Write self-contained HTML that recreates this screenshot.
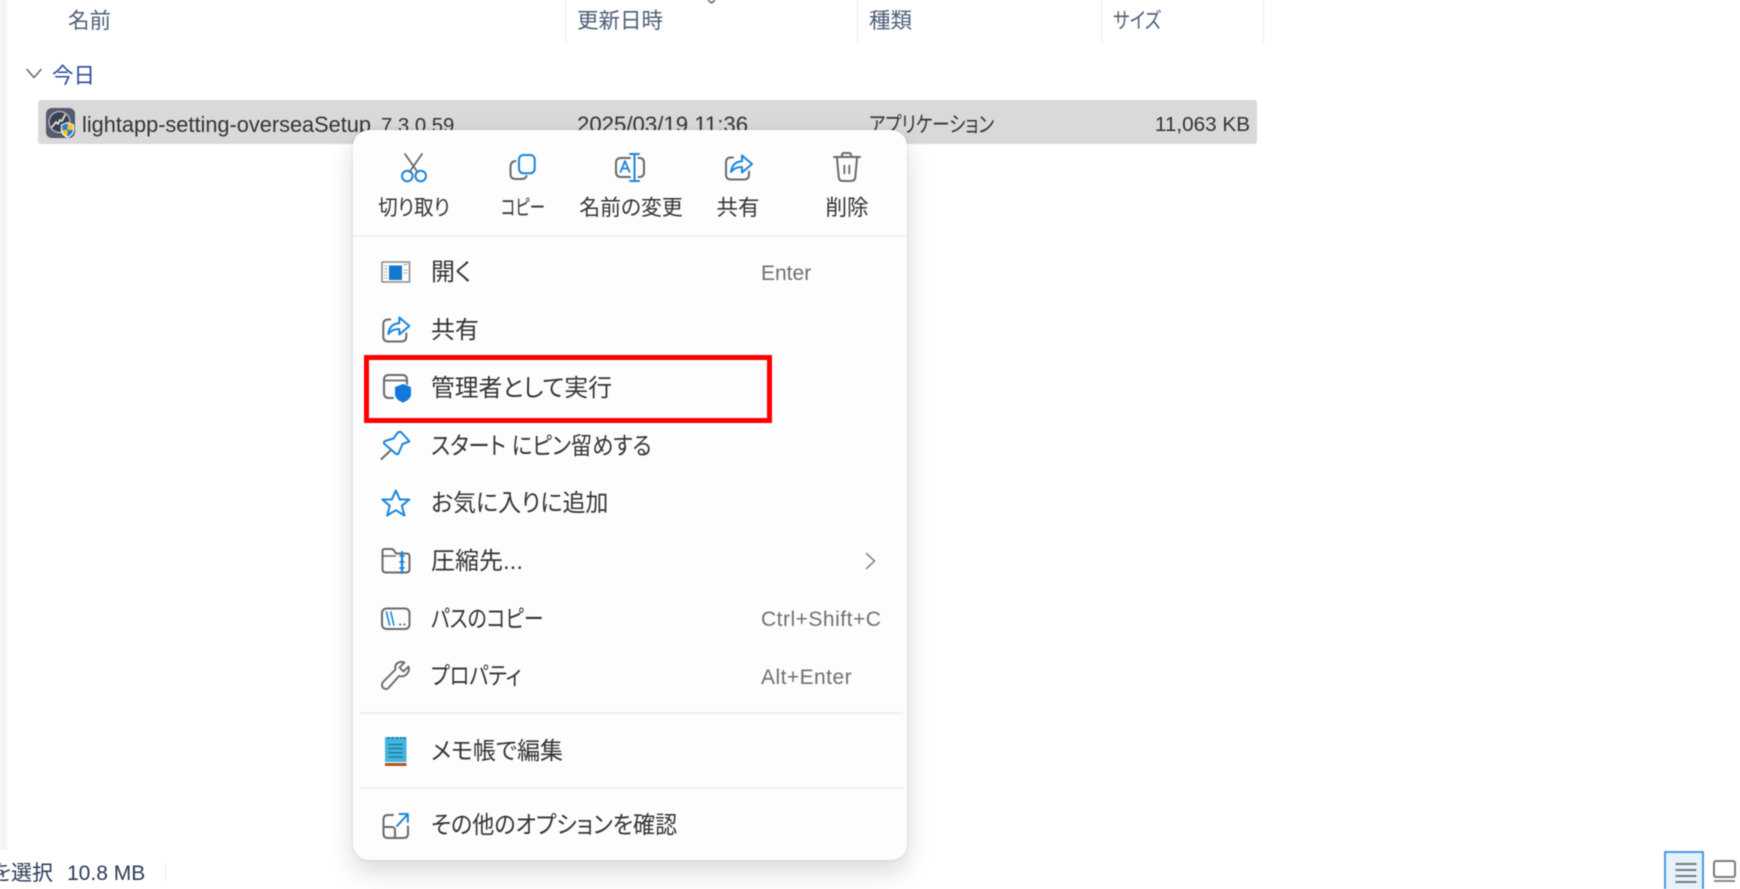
<!DOCTYPE html>
<html lang="ja">
<head>
<meta charset="utf-8">
<title>Context menu</title>
<style>
html,body{margin:0;padding:0;width:1740px;height:889px;overflow:hidden;background:#fff}
#w{position:absolute;left:0;top:0;width:1740px;height:889px;overflow:hidden;filter:blur(.4px);font-family:"Liberation Sans","Noto Sans CJK JP",sans-serif;font-feature-settings:"palt";color:#333}
#w div{position:absolute;white-space:nowrap}
.h{top:6.500px;line-height:28px;font-size:21.500px;color:#4d5f78;transform-origin:left center}
.sep{top:0;width:1px;height:43px;background:#ebebeb}
.c{top:111px;line-height:28px;font-size:22.200px;color:#333;transform-origin:left center}
#menu{left:353px;top:130px;width:554px;height:730px;background:#fdfdfd;border-radius:16px;box-shadow:0 12px 26px rgba(0,0,0,.15),0 0 4px rgba(0,0,0,.1)}
.l{left:431px;line-height:32px;font-size:24px;color:#333;transform-origin:left center}
.k{left:761px;line-height:28px;font-size:21px;color:#707070}
.b{line-height:28px;font-size:21.500px;color:#333;top:194px}
.d{background:#efefef}
svg{position:absolute;left:0;top:0}
</style>
</head>
<body>
<div id="w">
<div style="left:0;top:0;width:7px;height:850px;background:#f4f4f4"></div>

<div class="h" style="left:68px">名前</div>
<div class="h" style="left:577px">更新日時</div>
<div class="h" style="left:869px">種類</div>
<div class="h" style="left:1113px;transform:scaleX(.82)">サイズ</div>
<div class="sep" style="left:565px"></div>
<div class="sep" style="left:857px"></div>
<div class="sep" style="left:1101px"></div>
<div class="sep" style="left:1263px"></div>

<div style="left:52px;top:61px;line-height:30px;font-size:21.500px;color:#2c4a9c">今日</div>

<div style="left:38px;top:100px;width:1219px;height:44px;background:#d9d9d9;border-radius:3px"></div>
<div class="c" style="left:82px;font-size:21.750px">lightapp-setting-overseaSetup<span style="font-size:18px">_</span><span style="font-size:20.300px">7.3.0.59</span></div>
<div class="c" style="left:577px">2025/03/19 11:36</div>
<div class="c" style="left:869px;font-size:21.800px;transform:scaleX(.805)">アプリケーション</div>
<div class="c" style="right:490px;font-size:20.700px">11,063 KB</div>

<div id="menu"></div>

<div class="b" style="left:414px;transform:translateX(-50%) scaleX(.91)">切り取り</div>
<div class="b" style="left:523px;transform:translateX(-50%) scaleX(.716)">コピー</div>
<div class="b" style="left:631px;transform:translateX(-50%) scaleX(.97)">名前の変更</div>
<div class="b" style="left:738px;transform:translateX(-50%)">共有</div>
<div class="b" style="left:847px;transform:translateX(-50%)">削除</div>
<div class="d" style="left:353px;top:235px;width:554px;height:2px"></div>

<div class="l" style="top:257px">開く</div>
<div class="l" style="top:315px">共有</div>
<div class="l" style="top:373px;transform:scaleX(.99)">管理者として実行</div>
<div class="l" style="top:431px;transform:scaleX(.885)">スタート にピン留めする</div>
<div class="l" style="top:488px;transform:scaleX(.958)">お気に入りに追加</div>
<div class="l" style="top:546px">圧縮先...</div>
<div class="l" style="top:604px;transform:scaleX(.827)">パスのコピー</div>
<div class="l" style="top:661px;transform:scaleX(.844)">プロパティ</div>
<div class="l" style="top:736px;transform:scaleX(.957)">メモ帳で編集</div>
<div class="l" style="top:810px;transform:scaleX(.92)">その他のオプションを確認</div>

<div class="k" style="top:260px">Enter</div>
<div class="k" style="top:606px;letter-spacing:.5px">Ctrl+Shift+C</div>
<div class="k" style="top:664px;letter-spacing:.45px">Alt+Enter</div>

<div class="d" style="left:360px;top:712px;width:543px;height:2px"></div>
<div class="d" style="left:360px;top:787px;width:543px;height:2px"></div>

<div style="left:364px;top:355px;width:398px;height:58px;border:5px solid #fe0000"></div>

<div style="right:1687px;top:860px;line-height:28px;font-size:21px;color:#2b3b58">を選択</div>
<div style="left:67px;top:859.500px;line-height:28px;font-size:21px;color:#2b3b58">10.8 MB</div>
<div style="left:165px;top:862px;width:1px;height:20px;background:#ececec"></div>

<div style="left:1664px;top:851px;width:36px;height:50px;background:#e5f1fb;border:2px solid #4a9ae0"></div>

<svg width="1740" height="889" viewBox="0 0 1740 889" fill="none" stroke-linecap="round" stroke-linejoin="round">
  <!-- sort caret -->
  <path d="M708 0l3.500 3 3.500-3" stroke="#666" stroke-width="1.500"/>
  <!-- group chevron -->
  <path d="M27 69.500l7 8 7-8" stroke="#666" stroke-width="1.500"/>

  <!-- file icon -->
  <rect x="46" y="108" width="29" height="30" rx="6" fill="#555a6c"/>
  <circle cx="59.500" cy="122" r="10.500" fill="#3a3f50" stroke="#a9adbb" stroke-width="1.500"/>
  <path d="M52 127l4-5 2 2 2-4 2 1 3-6" stroke="#e2e4ea" stroke-width="1.800"/>
  <path d="M67.500 122.500l6 2.500v5q0 4.500-6 7.500-6-3-6-7.500v-5z" fill="#fff" stroke="#fff" stroke-width="1.200"/>
  <path d="M67.500 123l-5.500 2.200v4.800h5.500z" fill="#2a7fd5"/>
  <path d="M67.500 123l5.500 2.200v4.800h-5.500z" fill="#f7c325"/>
  <path d="M62 130q.2 4 5.500 7v-7z" fill="#f7c325"/>
  <path d="M73 130q-.2 4-5.500 7v-7z" fill="#2a7fd5"/>

  <!-- scissors -->
  <path d="M405 154l12.500 18M422 154l-12.500 18" stroke="#6a6a6a" stroke-width="1.800"/>
  <circle cx="407.300" cy="176" r="5.300" stroke="#1a86dc" stroke-width="2"/>
  <circle cx="420.700" cy="176" r="5.300" stroke="#1a86dc" stroke-width="2"/>

  <!-- copy -->
  <rect x="519" y="155" width="15.700" height="18.300" rx="4.500" stroke="#1a86dc" stroke-width="2"/>
  <path d="M515.500 161q-5 .5-5 6v7q0 5 5 5h6q4 0 5-3" stroke="#6a6a6a" stroke-width="2"/>

  <!-- rename -->
  <path d="M630 158h-9q-5 0-5 5v9q0 5 5 5h9" stroke="#6a6a6a" stroke-width="2"/>
  <path d="M638.500 158h1q4.500 0 4.500 5v9q0 5-4.500 5h-1" stroke="#6a6a6a" stroke-width="2"/>
  <path d="M630 154h9M634.500 154v27M630 181h9" stroke="#1a86dc" stroke-width="2"/>
  <path d="M620.500 172l4.500-11 4.500 11M622 168.500h6" stroke="#1a86dc" stroke-width="1.800"/>

  <!-- share toolbar -->
  <path d="M733 157.500h-2q-5 0-5 5v12q0 5 5 5h13q5 0 5-5v-3" stroke="#6a6a6a" stroke-width="2"/>
  <path d="M731 172C732 165 736 161.500 742 161.300V155.500L752 164 742 172.500V167C738 167 734 168 731 172Z" stroke="#1a86dc" stroke-width="2" fill="#fdfdfd"/>

  <!-- trash -->
  <path d="M834 157h26M842 156.500v-1.500q0-2 2-2h5q2 0 2 2v1.500" stroke="#6a6a6a" stroke-width="2"/>
  <path d="M837 158l1.700 19q.3 4 4.300 4h8q4 0 4.300-4L857 158" stroke="#6a6a6a" stroke-width="2"/>
  <path d="M844.300 165.500v8M849.300 165.500v8" stroke="#6a6a6a" stroke-width="1.800"/>

  <!-- open -->
  <rect x="382" y="262" width="27.500" height="20" stroke="#8a8a8a" stroke-width="1.600"/>
  <rect x="389" y="265.500" width="13" height="14.500" fill="#1478cc"/>
  <path d="M384.500 266h2.500M384.500 269h2.500M384.500 272h2.500M384.500 275h2.500M384.500 278h2.500M404 270h3M404 273h3" stroke="#aaa" stroke-width="1"/>
  <path d="M404 264.500h3" stroke="#bbb" stroke-width="1.500"/>

  <!-- share list -->
  <g transform="translate(-342.700 162)">
    <path d="M733 157.500h-2q-5 0-5 5v12q0 5 5 5h13q5 0 5-5v-3" stroke="#6a6a6a" stroke-width="2"/>
    <path d="M731 172C732 165 736 161.500 742 161.300V155.500L752 164 742 172.500V167C738 167 734 168 731 172Z" stroke="#1a86dc" stroke-width="2" fill="#fdfdfd"/>
  </g>

  <!-- admin -->
  <path d="M393 398h-4q-5 0-5-5v-13q0-5 5-5h13q5 0 5 5v4" stroke="#6a6a6a" stroke-width="2"/>
  <path d="M384.500 380.500h22" stroke="#6a6a6a" stroke-width="1.800"/>
  <path d="M403 384.500l7.500 3v6.500q0 5-7.500 8-7.500-3-7.500-8v-6.500z" fill="#1478d8" stroke="#1478d8" stroke-width="1"/>

  <!-- pin -->
  <path d="M381.500 459l8.500-8" stroke="#6a6a6a" stroke-width="2"/>
  <path d="M401.500 432.500L409.500 441.500 402.500 444 398.500 453.500Q397 455 395 453L384.500 444Q383 442 385 441L393.500 438.500 397 433.500Q399 431 401.500 432.500Z" stroke="#1a86dc" stroke-width="2"/>

  <!-- star -->
  <path d="M395.800 490.500l4 9h9.500l-7.500 6.300 2.700 9.700-8.700-5.300-8.700 5.300 2.700-9.700-7.500-6.300h9.500z" stroke="#1a86dc" stroke-width="2"/>

  <!-- folder -->
  <path d="M382.500 554v-3q0-2 2-2h7q1.500 0 2.500 1.500l2 3h10.500q3 0 3 3v12.500q0 3.500-3.500 3.500h-20q-3.500 0-3.500-3.500z" stroke="#6a6a6a" stroke-width="2"/>
  <path d="M382.500 556h13" stroke="#6a6a6a" stroke-width="1.500"/>
  <path d="M402 552v21" stroke="#1a86dc" stroke-width="2.200"/>
  <path d="M400 556h4M400 562h4M400 568h4" stroke="#1a86dc" stroke-width="1.700"/>

  <!-- path copy -->
  <rect x="382" y="608.500" width="27.500" height="20.500" rx="4.500" stroke="#6a6a6a" stroke-width="2"/>
  <path d="M386.500 612l3 13M390.800 612l3 13" stroke="#1a86dc" stroke-width="1.600"/>
  <path d="M400 624.500h.3M404.300 624.500h.3" stroke="#2b78b8" stroke-width="2"/>

  <!-- wrench -->
  <path d="M404.500 662.500L399.500 667.500 403.500 671.500 408.500 666.500C410.500 672 405 678 399 676L388.500 688C386 690.500 381.500 688 382 684.500 382 683 383 682 384 681L395.500 669.500C394 664 399 660.500 404.500 662.500Z" stroke="#6a6a6a" stroke-width="1.900"/>

  <!-- submenu chevron -->
  <path d="M866.500 553.500l8 7.500-8 7.500" stroke="#777" stroke-width="1.500"/>

  <!-- notepad -->
  <rect x="385" y="737" width="21.500" height="25" rx="1" fill="#44b6dd"/>
  <rect x="385" y="762" width="21.500" height="1" fill="#fff"/>
  <rect x="385" y="763" width="21.500" height="3" fill="#b4551c"/>
  <path d="M388.500 738h.2M392.500 738h.2M396.800 738h.2M401 738h.2M404.500 738h.2" stroke="#1b6d92" stroke-width="2"/>
  <path d="M388.500 744.500h14.500M388.500 748.500h14.500M388.500 752.800h14.500M388.500 757h14.500" stroke="#1c7da3" stroke-width="1.500" stroke-linecap="butt"/>

  <!-- more options -->
  <path d="M393 815h-5q-4.500 0-4.500 4.500v14q0 4.500 4.500 4.500h15.500q4.500 0 4.500-4.500v-7" stroke="#6a6a6a" stroke-width="2"/>
  <path d="M383.500 827h8q3.500 0 3.500 3.500v7.500" stroke="#6a6a6a" stroke-width="2"/>
  <path d="M397 826l10.500-11.500M399.500 814h8.300v8" stroke="#1a86dc" stroke-width="2"/>

  <!-- view buttons -->
  <path d="M1675.500 864h21M1675.500 870h21M1675.500 876h21M1675.500 882h21" stroke="#7a7a7a" stroke-width="2" stroke-linecap="butt"/>
  <rect x="1714" y="861" width="21" height="16" rx="2" stroke="#7a7a7a" stroke-width="2"/>
  <path d="M1714 881h21" stroke="#8a8a8a" stroke-width="2" stroke-linecap="butt"/>
</svg>
</div>
</body>
</html>
